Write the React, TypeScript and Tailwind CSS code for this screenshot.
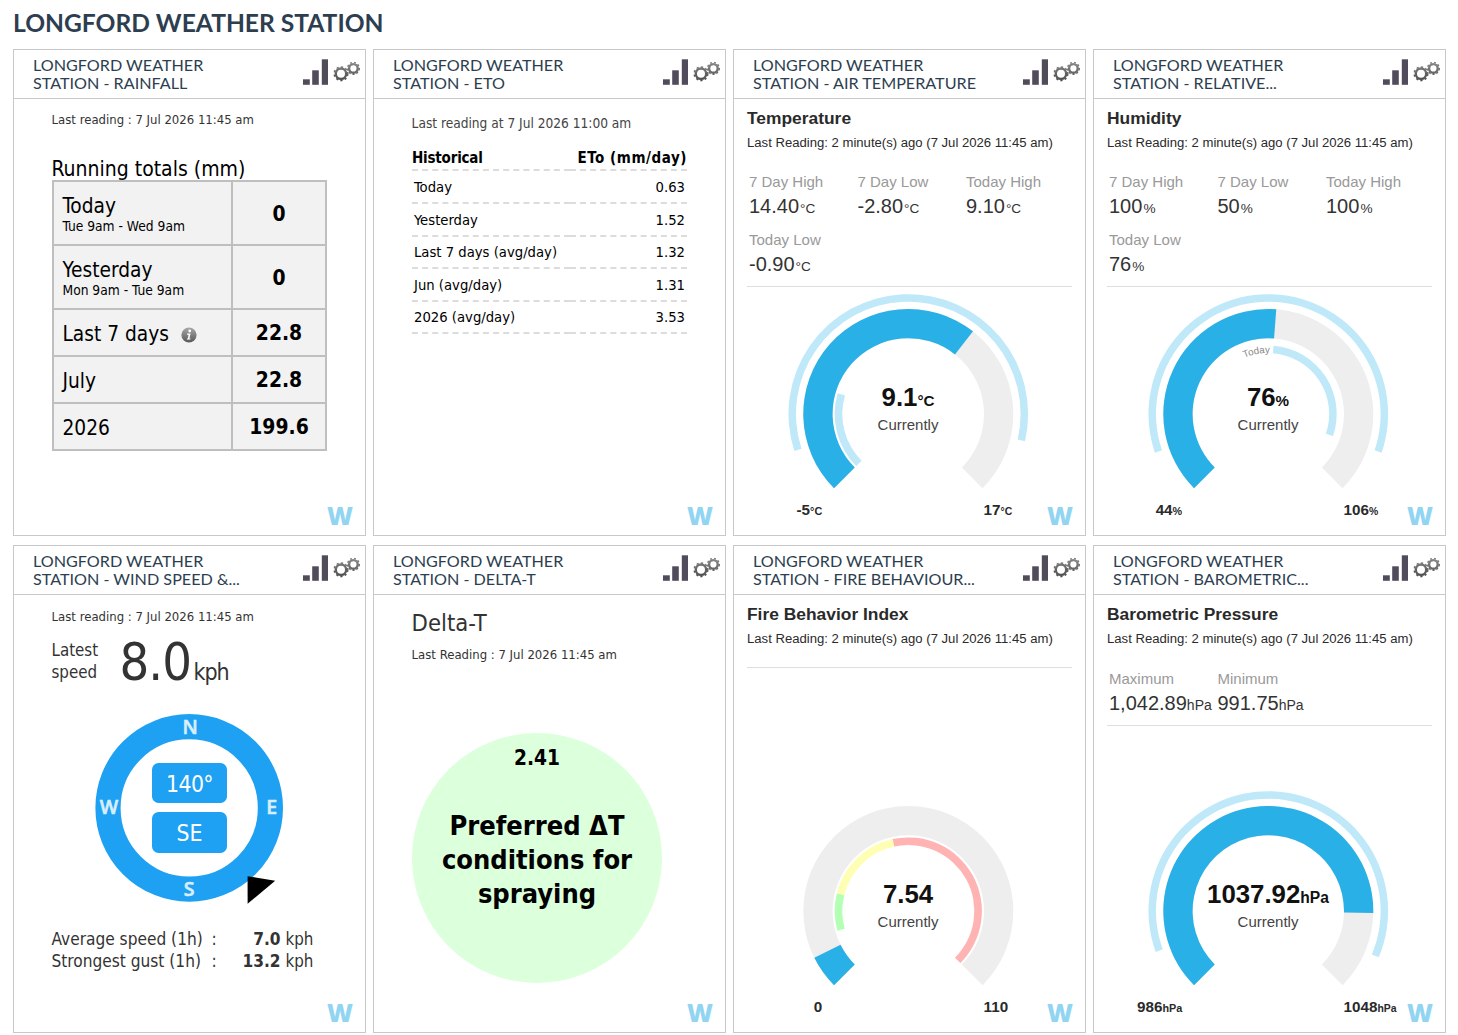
import React, { type ReactNode } from "react";

const TAHOMA = "font-['DejaVu_Sans_Condensed','DejaVu_Sans',sans-serif]";
const ARIAL = "font-['Liberation_Sans',sans-serif]";

function Gear({ cx, cy, r }: { cx: number; cy: number; r: number }) {
  const teeth = (2 * Math.PI * r) / 20;
  return (
    <g fill="none" stroke="url(#gear)">
      <circle cx={cx} cy={cy} r={r - 2} strokeWidth={2.4} />
      <circle cx={cx} cy={cy} r={r - 0.4} strokeWidth={1.5} strokeDasharray={`${teeth} ${teeth}`} />
    </g>
  );
}

function HeaderIcons() {
  return (
    <svg width="60" height="32" viewBox="302 56 60 32" className="shrink-0">
      <defs>
        <linearGradient id="gear" gradientUnits="userSpaceOnUse" x1="0" y1="62" x2="0" y2="82">
          <stop offset="0" stopColor="#8a8a8a" />
          <stop offset="1" stopColor="#484848" />
        </linearGradient>
      </defs>
      <g fill="#514c5b">
        <rect x="303" y="79.3" width="6.8" height="5.5" />
        <rect x="312.2" y="70.3" width="6.6" height="14.5" />
        <rect x="321.8" y="59.3" width="6.2" height="25.5" />
      </g>
      <Gear cx={341} cy={73.7} r={7.2} />
      <Gear cx={353.4} cy={68.4} r={6.3} />
    </svg>
  );
}

function Card({ title, tall, children }: { title: string; tall?: boolean; children: ReactNode }) {
  return (
    <section className={`relative flex flex-col border border-[#c8c8c8] bg-white ${tall ? "h-[488px]" : "h-[487px]"}`}>
      <header className="flex h-[49px] shrink-0 justify-between border-b border-[#c8c8c8] pl-[19px] pt-1.5">
        <h2 className="whitespace-pre font-['Lato',sans-serif] text-[16.17px] leading-[18px] text-[#2c3e50]">
          {"LONGFORD WEATHER\n" + title}
        </h2>
        <div className="mr-[3px]">
          <HeaderIcons />
        </div>
      </header>
      {children}
      <span className="absolute bottom-[2px] right-[12px] font-['Open_Sans',sans-serif] text-[25px] font-extrabold leading-[36px] text-[#92d5f2]">
        W
      </span>
    </section>
  );
}

/* ---------- Rainfall ---------- */

const rain: { label: string; sub?: string; info?: boolean; value: string }[] = [
  { label: "Today", sub: "Tue 9am - Wed 9am", value: "0" },
  { label: "Yesterday", sub: "Mon 9am - Tue 9am", value: "0" },
  { label: "Last 7 days", info: true, value: "22.8" },
  { label: "July", value: "22.8" },
  { label: "2026", value: "199.6" },
];

function InfoIcon() {
  return (
    <svg width="16" height="16" viewBox="0 0 16 16" className="ml-3 mt-[3px]">
      <defs>
        <linearGradient id="info" x1="0" y1="0" x2="0" y2="1">
          <stop offset="0" stopColor="#a8a8a8" />
          <stop offset="1" stopColor="#585858" />
        </linearGradient>
      </defs>
      <circle cx="8" cy="8" r="7.6" fill="url(#info)" />
      <circle cx="8.7" cy="4" r="1.4" fill="#fff" />
      <path d="M6 6.6h3.5L8.4 11.4h1.2l-.3 1.1H5.8l.3-1h.7l.8-3.7H5.9z" fill="#fff" />
    </svg>
  );
}

function Rainfall() {
  return (
    <div className={`${TAHOMA} pl-[37px] pt-[11px] text-black`}>
      <p className="pl-[0.6px] text-[13px] leading-[20px] text-[#333]">Last reading : 7 Jul 2026 11:45 am</p>
      <p className="mt-[28px] pl-[0.4px] text-[21px] leading-[22px]">Running totals (mm)</p>
      <div className="ml-[1px] flex w-[275px] flex-col gap-[2px] bg-[#bfbfbf] p-[2px]">
        {rain.map((r) => (
          <div key={r.label} className={`grid grid-cols-[177px_92px] gap-[2px] ${r.sub ? "h-[62px]" : "h-[45px]"}`}>
            <div className={`flex flex-col justify-center bg-[#f2f2f2] pl-[8.5px] ${r.sub ? "" : "pt-[2px]"}`}>
              <div className="flex items-center text-[20.7px] leading-[22px]">
                {r.label}
                {r.info && <InfoIcon />}
              </div>
              {r.sub && <div className="-mb-1 text-[13.7px] leading-[18px]">{r.sub}</div>}
            </div>
            <div className={`flex items-center justify-center bg-[#f2f2f2] text-[20.9px] font-bold ${r.sub ? "pt-1" : "pt-[3px]"}`}>
              {r.value}
            </div>
          </div>
        ))}
      </div>
    </div>
  );
}

/* ---------- ETo ---------- */

const eto = [
  { label: "Today", value: "0.63", h: "h-[33px]" },
  { label: "Yesterday", value: "1.52", h: "h-[32px]" },
  { label: "Last 7 days (avg/day)", value: "1.32", h: "h-[33px]" },
  { label: "Jun (avg/day)", value: "1.31", h: "h-[32px]" },
  { label: "2026 (avg/day)", value: "3.53", h: "h-[33px]" },
];

function Eto() {
  const line = "border-b-2 border-dashed border-[#dcdcdc]";
  return (
    <div className={`${TAHOMA} pl-[37px] pt-[14px] text-black`}>
      <p className="pl-[0.6px] text-[13.6px] leading-[20px] text-[#444]">Last reading at 7 Jul 2026 11:00 am</p>
      <div className="ml-[1px] mt-px w-[275px]">
        <div className="grid h-[37px] grid-cols-[158px_117px] text-[15px] font-bold leading-[20px]">
          <div className={`${line} whitespace-nowrap pt-[14px] tracking-[-0.2px]`}>Historical</div>
          <div className={`${line} flex justify-end whitespace-nowrap pt-[14px] tracking-[0.55px]`}>ETo (mm/day)</div>
        </div>
        {eto.map((r) => (
          <div key={r.label} className={`grid grid-cols-[158px_117px] text-[14.7px] leading-[30px] ${r.h}`}>
            <div className={`${line} pl-[2px] pt-px`}>{r.label}</div>
            <div className={`${line} pr-[2px] pt-px text-right`}>{r.value}</div>
          </div>
        ))}
      </div>
    </div>
  );
}

/* ---------- Gauges ---------- */

const CX = 174.3;
const CY = 126;

function polar(r: number, deg: number) {
  const a = ((deg - 90) * Math.PI) / 180;
  return `${(CX + r * Math.cos(a)).toFixed(2)} ${(CY + r * Math.sin(a)).toFixed(2)}`;
}

function sector(r0: number, r1: number, a: number, b: number) {
  const large = b - a > 180 ? 1 : 0;
  return `M${polar(r1, a)}A${r1} ${r1} 0 ${large} 1 ${polar(r1, b)}L${polar(r0, b)}A${r0} ${r0} 0 ${large} 0 ${polar(r0, a)}Z`;
}

type Band = { from: number; to: number; color: string; r0?: number; r1?: number };

interface GaugeProps {
  heading: string;
  stats: [string, string][];
  unit: string;
  min: number;
  max: number;
  value: number;
  outer?: [number, number];
  bands?: Band[];
  today?: boolean;
  low?: boolean;
}

function Gauge({ heading, stats, unit, min, max, value, outer, bands = [], today, low }: GaugeProps) {
  const angle = (v: number) => ((v - min) / (max - min)) * 270 - 135;
  return (
    <>
      <div className={`${ARIAL} pl-[13px] pt-2`}>
        <h3 className="text-[17.4px] font-bold leading-[22px] text-[#2a2a2a]">{heading}</h3>
        <p className="mt-1 text-[13.12px] leading-[20px] text-[#2a2a2a]">
          Last Reading: 2 minute(s) ago (7 Jul 2026 11:45 am)
        </p>
        <div className={`w-[325px] border-b border-[#dedede] ${low ? "mt-[18px]" : "mt-[17px]"}`}>
          <dl className="grid grid-cols-[108.5px_108.5px_108px] pl-[2px]">
            {stats.map(([k, v]) => (
              <div key={k} className="h-[58px] whitespace-nowrap pt-[3px]">
                <dt className="text-[15px] leading-[18px] text-[#999]">{k}</dt>
                <dd className="mt-[3px] text-[20px] leading-[24px] text-[#333]">
                  {v}
                  <span className={unit === "hPa" ? "text-[14px]" : "ml-px text-[13.6px]"}>{unit}</span>
                </dd>
              </div>
            ))}
          </dl>
        </div>
      </div>
      <svg width="351" height="247" viewBox="0 0 351 247" className={`${ARIAL} mt-auto shrink-0`}>
        <path d={sector(75.7, 105, -135, 135)} fill="#eeeeee" />
        <path d={sector(75.7, 105, -135, angle(value))} fill="#29b0e6" />
        {outer && <path d={sector(112.3, 119.8, angle(outer[0]), angle(outer[1]))} fill="#bfe8f9" />}
        {bands.map((b) => (
          <path key={b.from} d={sector(b.r0 ?? 66, b.r1 ?? 73.6, angle(b.from), angle(b.to))} fill={b.color} />
        ))}
        {today && (
          <>
            <path id="today-arc" d={`M${polar(61, -60)}A61 61 0 0 1 ${polar(61, 1.5)}`} fill="none" />
            <text fontSize="9.8" fill="#888" textAnchor="end">
              <textPath href="#today-arc" startOffset="100%">
                Today
              </textPath>
            </text>
          </>
        )}
        <text x={CX - 0.3} y="118" textAnchor="middle" fontSize="25.8" fontWeight="700" fill="#111">
          {value}
          <tspan fontSize={unit === "hPa" ? 15.6 : 15.2}>{unit}</tspan>
        </text>
        <text x={CX - 0.3} y="142" textAnchor="middle" fontSize="15" fill="#444">
          Currently
        </text>
        <g fontSize="15.2" fontWeight="700" fill="#2a2a2a">
          <text x="88.2" y="226.7" textAnchor="end">
            {min}
            <tspan fontSize="10.8">{unit}</tspan>
          </text>
          <text x="249.6" y="226.7">
            {max}
            <tspan fontSize="10.4">{unit}</tspan>
          </text>
        </g>
      </svg>
    </>
  );
}

/* ---------- Wind ---------- */

function Compass() {
  return (
    <svg width="351" height="210" viewBox="14 705 351 210" className="mt-[19px] block">
      <circle cx="189.2" cy="807.9" r="81.2" fill="none" stroke="#1ea1f2" strokeWidth="25.2" />
      <g
        fill="#d9eefc"
        stroke="#d9eefc"
        strokeWidth="0.6"
        fontSize="19.5"
        fontWeight="600"
        textAnchor="middle"
        className="font-['Open_Sans',sans-serif]"
      >
        <text x="190.2" y="734">N</text>
        <text x="271.8" y="814">E</text>
        <text x="189.2" y="896.3">S</text>
        <text x="109" y="814">W</text>
      </g>
      <rect x="152" y="763" width="75" height="40" rx="6.5" fill="#1ea1f2" />
      <rect x="152" y="812" width="75" height="41" rx="6.5" fill="#1ea1f2" />
      <g fill="#fff" fontSize="22.8" textAnchor="middle" className="font-['DejaVu_Sans_Condensed','DejaVu_Sans',sans-serif]">
        <text x="189.5" y="791.7" letterSpacing="-0.6">140°</text>
        <text x="189.5" y="840.8">SE</text>
      </g>
      <path d="M247.6 876.2L275.2 880.7L247.6 903.8Z" fill="#000" />
    </svg>
  );
}

const windRows = [
  ["Average speed (1h)", "7.0"],
  ["Strongest gust (1h)", "13.2"],
];

function Wind() {
  return (
    <div className={`${TAHOMA} pt-3 text-[#333]`}>
      <p className="pl-[37.6px] text-[13px] leading-[20px]">Last reading : 7 Jul 2026 11:45 am</p>
      <div className="mt-[9px] flex h-[50px] whitespace-nowrap pl-[37.5px]">
        <div className="w-[68px] pt-[3px] text-[16.8px] leading-[22px]">
          Latest
          <br />
          speed
        </div>
        <div className="flex items-baseline leading-[52px]">
          <span className="w-[74px] text-[52px] tracking-[-0.9px]">8.0</span>
          <span className="text-[23px] tracking-[-1.1px]">kph</span>
        </div>
      </div>
      <Compass />
      <div className="mt-[13px] pl-[37.5px] text-[17.15px] leading-[22px]">
        {windRows.map(([k, v]) => (
          <div key={k} className="grid grid-cols-[159px_70px_40px] whitespace-nowrap">
            <span>{k}</span>
            <span className="flex justify-between pl-px">
              <span>:</span>
              <b>{v}</b>
            </span>
            <span className="pl-[5px] text-[16.8px]">kph</span>
          </div>
        ))}
      </div>
    </div>
  );
}

/* ---------- Delta-T ---------- */

function DeltaT() {
  return (
    <div className={`${TAHOMA} pl-[37px] pt-[14px] text-[#333]`}>
      <h3 className="pl-[0.6px] text-[23.6px] leading-[28px]">Delta-T</h3>
      <p className="mt-[8px] pl-[0.6px] text-[13px] leading-[20px]">Last Reading : 7 Jul 2026 11:45 am</p>
      <div className="ml-[1px] mt-[68px] h-[250px] w-[250px] rounded-full bg-[#dcffdc] pt-[13px] text-center font-bold text-black">
        <p className="text-[20.7px] leading-[24px]">2.41</p>
        <p className="mt-[39px] text-[27px] leading-[34px]">
          Preferred ΔT
          <br />
          conditions for
          <br />
          spraying
        </p>
      </div>
    </div>
  );
}

export default function App() {
  return (
    <main className="h-[1035px] w-[1458px] overflow-hidden bg-white pl-[13px]">
      <h1 className="mb-1 h-[45px] font-['Lato',sans-serif] text-[24.6px] font-bold leading-[45px] text-[#2c3e50]">
        LONGFORD WEATHER STATION
      </h1>
      <div className="grid grid-cols-[repeat(4,353px)] gap-x-[7px] gap-y-[9px]">
        <Card title="STATION - RAINFALL">
          <Rainfall />
        </Card>
        <Card title="STATION - ETO">
          <Eto />
        </Card>
        <Card title="STATION - AIR TEMPERATURE">
          <Gauge
            heading="Temperature"
            stats={[
              ["7 Day High", "14.40"],
              ["7 Day Low", "-2.80"],
              ["Today High", "9.10"],
              ["Today Low", "-0.90"],
            ]}
            unit="°C"
            min={-5}
            max={17}
            value={9.1}
            outer={[-2.8, 14.4]}
            bands={[{ from: -5, to: 0, color: "#bfe8f9" }]}
          />
        </Card>
        <Card title="STATION - RELATIVE...">
          <Gauge
            heading="Humidity"
            stats={[
              ["7 Day High", "100"],
              ["7 Day Low", "50"],
              ["Today High", "100"],
              ["Today Low", "76"],
            ]}
            unit="%"
            min={44}
            max={106}
            value={76}
            outer={[50, 100]}
            bands={[{ from: 76, to: 100, color: "#bfe8f9", r0: 60.9, r1: 68.4 }]}
            today
          />
        </Card>
        <Card title="STATION - WIND SPEED &..." tall>
          <Wind />
        </Card>
        <Card title="STATION - DELTA-T" tall>
          <DeltaT />
        </Card>
        <Card title="STATION - FIRE BEHAVIOUR..." tall>
          <Gauge
            heading="Fire Behavior Index"
            stats={[]}
            unit=""
            min={0}
            max={110}
            value={7.54}
            bands={[
              { from: 12, to: 24, color: "#b3ffb3" },
              { from: 24, to: 50, color: "#ffffb3" },
              { from: 50, to: 110, color: "#ffb3b3" },
            ]}
            low
          />
        </Card>
        <Card title="STATION - BAROMETRIC..." tall>
          <Gauge
            heading="Barometric Pressure"
            stats={[
              ["Maximum", "1,042.89"],
              ["Minimum", "991.75"],
            ]}
            unit="hPa"
            min={986}
            max={1048}
            value={1037.92}
            outer={[991.75, 1042.89]}
            low
          />
        </Card>
      </div>
    </main>
  );
}
